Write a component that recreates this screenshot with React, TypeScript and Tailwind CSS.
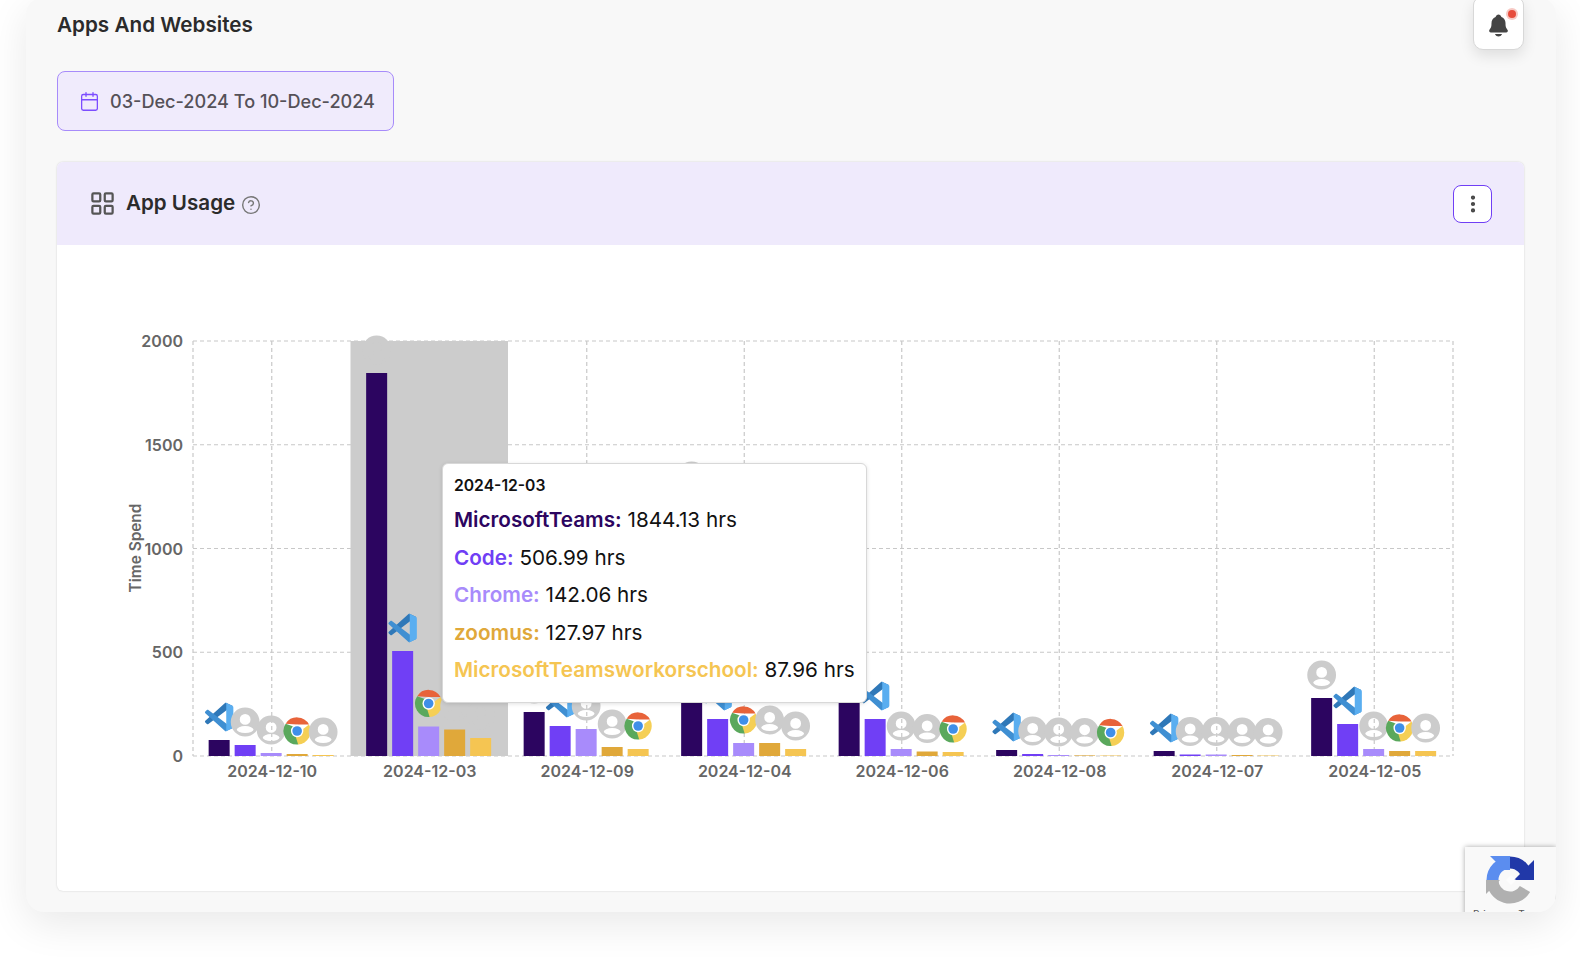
import { Calendar, CircleHelp, EllipsisVertical, LayoutGrid } from "lucide-react"
import { IoNotifications } from "react-icons/io5"

type IconKind = "vs" | "user" | "chrome"

const barColors = ["#2c0560", "#703ff5", "#a88bfb", "#e0a83a", "#f5c552"]

// first bar centre of the first band, all numbers in page pixels
const plotLeft = 193
const plotRight = 1453
const plotTop = 341
const plotBottom = 756
const bandWidth = 157.5

const groups: { date: string; heights: number[]; icons: IconKind[] }[] = [
  { date: "2024-12-10", heights: [16, 11, 3, 2, 1], icons: ["vs", "user", "user", "chrome", "user"] },
  { date: "2024-12-03", heights: [383, 105, 29.5, 26.5, 18], icons: ["user", "vs", "chrome", "user", "user"] },
  { date: "2024-12-09", heights: [44, 30, 27, 9, 7], icons: ["user", "vs", "user", "user", "chrome"] },
  { date: "2024-12-04", heights: [257, 37, 13, 13, 7], icons: ["user", "vs", "chrome", "user", "user"] },
  { date: "2024-12-06", heights: [60, 37, 7, 4.5, 4], icons: ["user", "vs", "user", "user", "chrome"] },
  { date: "2024-12-08", heights: [6, 2, 1, 0.6, 0.5], icons: ["vs", "user", "user", "user", "chrome"] },
  { date: "2024-12-07", heights: [5, 1.5, 1.5, 1, 0.5], icons: ["vs", "user", "user", "user", "user"] },
  { date: "2024-12-05", heights: [58, 32, 7, 5, 5], icons: ["user", "vs", "user", "chrome", "user"] },
]

const tooltipRows = [
  { name: "MicrosoftTeams:", value: "1844.13 hrs", color: "text-[#2c0560]" },
  { name: "Code:", value: "506.99 hrs", color: "text-[#703ff5]" },
  { name: "Chrome:", value: "142.06 hrs", color: "text-[#a88bfb]" },
  { name: "zoomus:", value: "127.97 hrs", color: "text-[#e0a83a]" },
  { name: "MicrosoftTeamsworkorschool:", value: "87.96 hrs", color: "text-[#f5c552]" },
]

function VsIcon({ x, y }: { x: number; y: number }) {
  return (
    <g transform={`translate(${x - 14.2} ${y - 14.2}) scale(0.284)`}>
      <path fill="#2f78b8" d="M96.46 10.8L75.86.88C73.47-.27 70.62.21 68.75 2.08L1.3 63.58c-1.81 1.65-1.81 4.51 0 6.16l5.51 5.01c1.49 1.35 3.72 1.45 5.32.24L93.36 13.37C96.09 11.3 100 13.25 100 16.67v-.24c0-2.4-1.38-4.59-3.54-5.63Z" />
      <path fill="#3f8fd2" d="M96.46 89.2L75.86 99.12c-2.39 1.15-5.24.67-7.11-1.2L1.3 36.42c-1.81-1.66-1.81-4.51 0-6.16l5.51-5.01c1.49-1.35 3.72-1.45 5.32-.24L93.36 86.63c2.73 2.07 6.64.12 6.64-3.3v.24c0 2.4-1.38 4.59-3.54 5.63Z" />
      <path fill="#5aaef0" d="M75.86 99.13c-2.39 1.15-5.24.66-7.11-1.21 2.31 2.31 6.25.67 6.25-2.59V4.67c0-3.26-3.94-4.89-6.25-2.59C70.62.21 73.47-.27 75.86.87l20.6 9.91c2.16 1.04 3.54 3.23 3.54 5.63v67.18c0 2.4-1.38 4.59-3.54 5.63l-20.6 9.91Z" />
    </g>
  )
}

function UserIcon({ x, y }: { x: number; y: number }) {
  return (
    <path
      transform={`translate(${x} ${y})`}
      fill="#cccccc"
      fillRule="evenodd"
      d="M0-14.4a14.4 14.4 0 1 0 0 28.8a14.4 14.4 0 1 0 0-28.8ZM0-8a5.4 5.4 0 1 1 0 10.8a5.4 5.4 0 1 1 0-10.8ZM-8.4 7.6a8.4 3.5 0 1 1 16.8 0a8.4 3.5 0 1 1-16.8 0Z"
    />
  )
}

function ChromeIcon({ x, y }: { x: number; y: number }) {
  return (
    <g transform={`translate(${x} ${y})`}>
      <path fill="#e8633a" d="M-11.5-7.2A13.5 13.5 0 0 1 11.9-6.5L0 -6.4Z" />
      <path fill="#5aa85c" d="M-11.5-7.2A13.5 13.5 0 0 0 1 13.5L6-1Z" />
      <path fill="#f5cf55" d="M11.9-6.5A13.5 13.5 0 0 1 1 13.5L-2 4Z" />
      <circle r="6.2" fill="#ffffff" />
      <circle r="4.8" fill="#3f8fe8" />
    </g>
  )
}

function BarIcon({ kind, x, y }: { kind: IconKind; x: number; y: number }) {
  if (kind === "vs") return <VsIcon x={x} y={y} />
  if (kind === "chrome") return <ChromeIcon x={x} y={y} />
  return <UserIcon x={x} y={y} />
}

function UsageChart() {
  const rowLines = [0, 1, 2, 3, 4].map((i) => plotTop + ((plotBottom - plotTop) / 4) * i)
  const centers = groups.map((_, i) => plotLeft + bandWidth * (i + 0.5))
  const columnLines = [plotLeft, ...centers, plotRight]
  const ticks = ["2000", "1500", "1000", "500", "0"]

  return (
    <svg viewBox="57 245 1467 646" className="h-[646px] w-[1467px] block">
      {rowLines.map((y) => (
        <line key={y} x1={plotLeft} x2={plotRight} y1={y} y2={y} stroke="#c8c8c8" strokeWidth={1.2} strokeDasharray="4 3" />
      ))}
      {columnLines.map((x) => (
        <line key={x} x1={x} x2={x} y1={plotTop} y2={plotBottom} stroke="#c8c8c8" strokeWidth={1.2} strokeDasharray="4 3" />
      ))}
      <rect x={plotLeft + bandWidth} y={plotTop} width={bandWidth} height={plotBottom - plotTop} fill="#cccccc" />

      {ticks.map((t, i) => (
        <text key={t} x={183} y={rowLines[i] + 6} textAnchor="end" className="fill-[#666666] text-[16px] font-semibold">
          {t}
        </text>
      ))}
      <text
        x={0}
        y={0}
        transform="translate(141 548) rotate(-90)"
        textAnchor="middle"
        className="fill-[#666666] text-[15.4px] font-semibold"
      >
        Time Spend
      </text>

      {barColors.map((color, s) =>
        groups.map((g, i) => (
          <rect
            key={g.date + s}
            x={centers[i] - 63.1 + 26 * s}
            y={plotBottom - g.heights[s]}
            width={21}
            height={g.heights[s]}
            fill={color}
          />
        )),
      )}
      {barColors.map((_, s) =>
        groups.map((g, i) => (
          <BarIcon
            key={g.date + s}
            kind={g.icons[s]}
            x={centers[i] - 52.6 + 26 * s}
            y={plotBottom - g.heights[s] - 23}
          />
        )),
      )}

      {groups.map((g, i) => (
        <text key={g.date} x={centers[i] + 0.5} y={777} textAnchor="middle" className="fill-[#666666] text-[16px] font-semibold">
          {g.date}
        </text>
      ))}
    </svg>
  )
}

function RecaptchaLogo() {
  return (
    <svg viewBox="0 0 48 48" className="h-12 w-12">
      <path fill="none" stroke="#b0b0b0" strokeWidth="12" d="M6.5 24A17.5 17.5 0 0 0 39 33" />
      <path fill="#b0b0b0" d="M0 24h14L0 38Z" />
      <path fill="none" stroke="#5b8def" strokeWidth="12" d="M6.5 24A17.5 17.5 0 0 1 24 6.5" />
      <path fill="#5b8def" d="M4 0H24V14H18Z" />
      <path fill="none" stroke="#2138a8" strokeWidth="12" d="M24 6.5A17.5 17.5 0 0 1 41.5 24" />
      <path fill="#2138a8" d="M48 4V24H28L34 18Z" />
      <path fill="#ffffff" d="M20 24l5-5 5 5-5 5Z" opacity="0.7" />
    </svg>
  )
}

export default function App() {
  return (
    <div className="h-[960px] w-[1580px] overflow-hidden bg-white pl-[26px] font-['Inter',sans-serif]">
      <div className="relative -mt-[3px] h-[915px] w-[1530px] overflow-hidden rounded-[18px] bg-[#f8f8f8] pr-[32px] pl-[31px] shadow-[0_12px_40px_rgba(0,0,0,0.09)]">
        <div className="flex h-[53px] items-start justify-between">
          <h1 className="mt-[13px] text-[20.7px] leading-[30px] font-semibold text-[#2b2b2b]">Apps And Websites</h1>
          <button className="flex h-[53px] w-[51px] items-center justify-center rounded-b-[10px] rounded-t-[8px] border border-[#d8d8d8] bg-white shadow-[0_6px_14px_rgba(0,0,0,0.1)]">
            <span className="relative mt-[3px] block">
              <IoNotifications className="h-[25px] w-[25px] text-[#444444]" />
              <span className="absolute -top-[3px] -right-[5px] h-[8px] w-[8px] rounded-full bg-[#e74c3c] ring-[2px] ring-[#f7c9c4]" />
            </span>
          </button>
        </div>

        <div className="mt-[21px] flex h-[60px] w-[337px] items-center gap-[10px] rounded-[8px] border-[1.5px] border-[#a78bfa] bg-[#f0ebfc] pl-[21px]">
          <Calendar className="h-[21px] w-[21px] text-[#7c4dff]" strokeWidth={1.5} />
          <span className="mt-[2px] text-[18.1px] font-medium text-[#555158]">03-Dec-2024 To 10-Dec-2024</span>
        </div>

        <div className="relative mt-[31px] h-[729px] w-[1467px] rounded-[6px] bg-white shadow-[0_0_2px_rgba(0,0,0,0.18)]">
          <div className="flex h-[83px] items-center justify-between rounded-t-[6px] bg-[#efeafc] pr-[32px] pl-[32px]">
            <div className="flex items-center">
              <LayoutGrid className="h-[27px] w-[27px] text-[#555555]" strokeWidth={2} />
              <span className="ml-[10px] text-[20.6px] font-semibold text-[#2b2b2b]">App Usage</span>
              <CircleHelp className="mt-[3px] ml-[6px] h-[20px] w-[20px] text-[#777777]" strokeWidth={1.7} />
            </div>
            <button className="flex h-[38px] w-[39px] items-center justify-center rounded-[8px] border-[1.5px] border-[#703ff5] bg-white">
              <EllipsisVertical className="h-[22px] w-[22px] text-[#444444]" strokeWidth={2.6} />
            </button>
          </div>

          <UsageChart />

          <div className="absolute top-[301px] left-[385px] h-[240px] w-[425px] rounded-[6px] border border-[#d8d8d8] bg-white pl-[11px] shadow-[0_1px_4px_rgba(0,0,0,0.12)]">
            <p className="mt-[12px] text-[15.7px] leading-[20px] font-semibold text-[#111111]">2024-12-03</p>
            <div className="mt-[5px]">
              {tooltipRows.map((row) => (
                <p key={row.name} className="h-[37.6px] text-[20.7px] leading-[37.6px] whitespace-nowrap text-[#111111]">
                  <span className={`font-semibold ${row.color}`}>{row.name}</span> {row.value}
                </p>
              ))}
            </div>
          </div>
        </div>

        <div className="absolute top-[850px] right-0 h-[80px] w-[91px] bg-[#f9f9f9] shadow-[0_0_5px_rgba(0,0,0,0.35)]">
          <div className="mt-[9px] ml-[21px]">
            <RecaptchaLogo />
          </div>
          <p className="mt-[4px] ml-[8px] text-[10px] leading-[12px] whitespace-nowrap text-[#555555]">Privacy - Terms</p>
        </div>
      </div>
    </div>
  )
}
